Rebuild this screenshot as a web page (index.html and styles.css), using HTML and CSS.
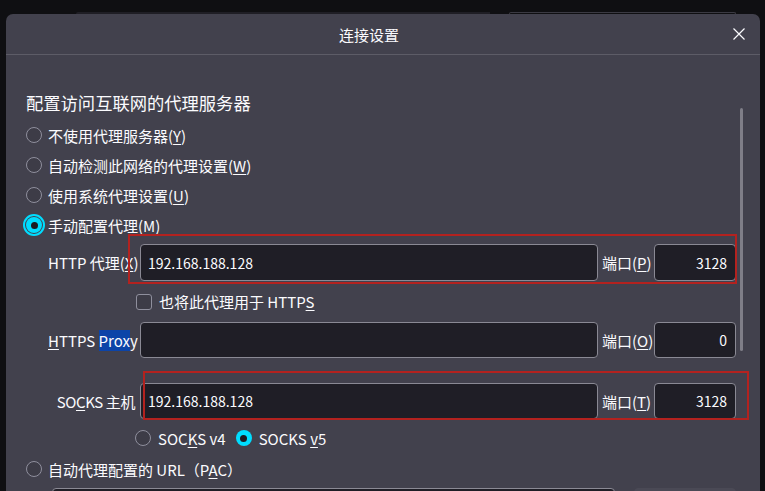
FILE: index.html
```html
<!DOCTYPE html>
<html lang="zh-CN">
<head>
<meta charset="utf-8">
<title>连接设置</title>
<link rel="stylesheet" href="styles.css">
</head>
<body>
<div class="backdrop">
  <div class="bd-a"></div>
  <div class="bd-b"></div>
</div>
<div class="dialog">
  <div class="header">
    <div class="title">连接设置</div>
    <div class="close">
      <svg width="12" height="12" viewBox="0 0 12 12"><path d="M0.5 0.5 L11.5 11.5 M11.5 0.5 L0.5 11.5" stroke="#fbfbfe" stroke-width="1.2" fill="none"/></svg>
    </div>
  </div>
  <div class="content">
    <div class="scrollbar"></div>
    <h1 class="heading">配置访问互联网的代理服务器</h1>
    <div class="radio-row"><span class="radio"></span><span>不使用代理服务器(<u>Y</u>)</span></div>
    <div class="radio-row"><span class="radio"></span><span>自动检测此网络的代理设置(<u>W</u>)</span></div>
    <div class="radio-row"><span class="radio"></span><span>使用系统代理设置(<u>U</u>)</span></div>
    <div class="radio-row"><span class="radio checked focused"></span><span>手动配置代理(<u>M</u>)</span></div>

    <div class="proxy">
      <div class="prow prow-http">
        <span class="lbl">HTTP 代理(<u>X</u>)</span>
        <div class="field">192.168.188.128</div>
        <span class="plbl">端口(<u>P</u>)</span>
        <div class="field port">3128</div>
      </div>
      <div class="check-row"><span class="checkbox"></span><span>也将此代理用于 HTTP<u>S</u></span></div>
      <div class="prow">
        <span class="lbl"><u>H</u>TTPS <span class="sel">Prox</span>y</span>
        <div class="field"></div>
        <span class="plbl">端口(<u>O</u>)</span>
        <div class="field port">0</div>
      </div>
      <div class="prow prow-socks">
        <span class="lbl lbl-socks">SO<u>C</u>KS 主机</span>
        <div class="field">192.168.188.128</div>
        <span class="plbl">端口(<u>T</u>)</span>
        <div class="field port">3128</div>
      </div>
      <div class="socks-ver">
        <span class="opt"><span class="radio small"></span><span>SOC<u>K</u>S v4</span></span>
        <span class="opt"><span class="radio small checked"></span><span>SOCKS <u>v</u>5</span></span>
      </div>
    </div>

    <div class="radio-row pac"><span class="radio"></span><span>自动代理配置的 URL（P<u>A</u>C）</span></div>
    <div class="pac-row">
      <div class="field pac-url"></div>
      <div class="field pac-btn"></div>
    </div>
  </div>
</div>
<div class="mark mark-http"></div>
<div class="mark mark-socks"></div>
</body>
</html>
```

FILE: styles.css
```css
html, body {
  margin: 0;
  padding: 0;
}

body {
  width: 765px;
  height: 491px;
  overflow: hidden;
  background: #0f0f12;
  font-family: "Noto Sans CJK SC", "Noto Sans", sans-serif;
  font-size: 15px;
  color: #fbfbfe;
  position: relative;
}

u {
  text-decoration: underline;
  text-underline-offset: 2px;
  text-decoration-thickness: 1px;
}

.backdrop {
  height: 14px;
  display: flex;
  align-items: flex-end;
  overflow: hidden;
}

.bd-a {
  margin-left: 76px;
  width: 414px;
  height: 2px;
  background: #1f1e25;
  border-top-left-radius: 3px;
}

.bd-b {
  margin-left: 19px;
  width: 227px;
  height: 2px;
  border-top: 1px solid #3b3a43;
  border-left: 1px solid #3b3a43;
  border-right: 1px solid #3b3a43;
  border-radius: 3px 3px 0 0;
  box-sizing: border-box;
}

.dialog {
  margin-left: 6px;
  width: 754px;
  height: 600px;
  background: #42414d;
  border-radius: 7px 7px 0 0;
}

.header {
  height: 40px;
  display: flex;
  align-items: center;
  border-bottom: 1px solid #5d5c67;
}

.title {
  flex: 1;
  text-align: center;
  font-size: 15px;
}

.close {
  width: 28px;
  height: 12px;
  padding-left: 1px;
  box-sizing: border-box;
  display: flex;
}

.content {
  position: relative;
  padding: 0 20px;
}

.scrollbar {
  position: absolute;
  left: 734px;
  top: 17px;
  width: 3px;
  height: 243px;
  border-radius: 2px;
  background: #7f7e88;
}

.heading {
  margin: 36px 0 5px;
  font-size: 17.3px;
  font-weight: 400;
  line-height: 24px;
}

.radio-row {
  height: 30px;
  display: flex;
  align-items: center;
  gap: 6px;
}

.radio {
  width: 16px;
  height: 16px;
  box-sizing: border-box;
  border-radius: 50%;
  border: 1px solid #8f8f9d;
  background: #3d3c47;
  flex: none;
  position: relative;
}

.radio.checked {
  border: none;
  background: #00ddff;
}

.radio.checked::after {
  content: "";
  position: absolute;
  left: 4.5px;
  top: 4.5px;
  width: 7px;
  height: 7px;
  border-radius: 50%;
  background: #1c1b22;
}

.radio.focused {
  outline: 2px solid #00ddff;
  outline-offset: 1px;
}

.proxy {
  margin-top: 4px;
  padding-left: 22px;
}

.prow {
  display: grid;
  grid-template-columns: 88px 458px 48px 82px;
  column-gap: 4px;
  align-items: center;
  height: 36px;
}

.prow-http {
  height: 37px;
}

.prow-socks {
  margin-top: 25px;
}

.lbl {
  text-align: right;
  white-space: nowrap;
  padding-right: 1px;
}

.lbl-socks {
  letter-spacing: -0.4px;
}

.sel {
  background: #0c44a8;
}

.plbl {
  white-space: nowrap;
}

.field {
  height: 100%;
  box-sizing: border-box;
  border: 1px solid #8a8994;
  border-radius: 4px;
  background: #1f1e26;
  display: flex;
  align-items: center;
  padding: 0 8px 0 7px;
  font-size: 14px;
}

.field.port {
  justify-content: flex-end;
}

.check-row {
  height: 41px;
  display: flex;
  align-items: center;
  gap: 7px;
  padding-left: 88px;
}

.checkbox {
  width: 16px;
  height: 16px;
  box-sizing: border-box;
  border: 1px solid #8f8f9d;
  border-radius: 3px;
  background: #3d3c47;
}

.socks-ver {
  height: 38px;
  display: flex;
  align-items: center;
  gap: 10px;
  padding-left: 87px;
}

.opt {
  display: flex;
  align-items: center;
  gap: 7px;
}

.radio-row.pac {
  height: 24px;
}

.pac-row {
  margin-top: 7px;
  padding-left: 26px;
  display: flex;
  gap: 19px;
  height: 36px;
}

.pac-url {
  width: 563px;
}

.pac-btn {
  width: 102px;
  background: #4a4955;
  border-color: #4a4955;
}

.mark {
  position: absolute;
  border: 2px solid #b3221f;
  box-sizing: border-box;
}

.mark-http {
  left: 128px;
  top: 234px;
  width: 609px;
  height: 50px;
}

.mark-socks {
  left: 143px;
  top: 371px;
  width: 606px;
  height: 49px;
}
```
